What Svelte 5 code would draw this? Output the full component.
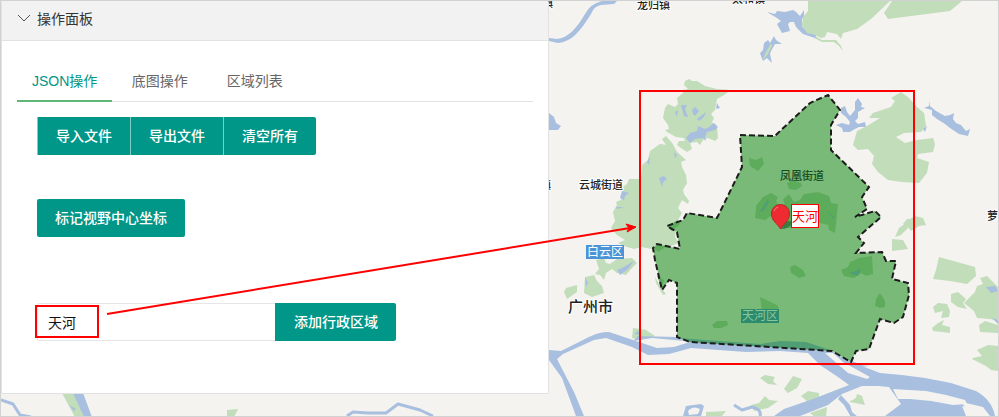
<script lang="ts">
  let open = true;
  let activeTab = 'json';
  let district = '天河';

  const tabs = [
    { id: 'json', label: 'JSON操作' },
    { id: 'basemap', label: '底图操作' },
    { id: 'areas', label: '区域列表' },
  ];

  const fileActions = ['导入文件', '导出文件', '清空所有'];

  const boundary =
    '740,135 775,136 778,133 810,103 828,95 840,110 831,125 831,150 869,187 862,197 867,209 855,217 875,211 881,217 858,237 864,243 856,253 882,252 886,261 896,261 892,279 908,283 909,295 903,317 894,323 880,319 869,349 856,351 851,362 832,351 770,347 690,342 677,337 677,283 669,280 662,290 655,260 653,248 657,244 680,249 677,232 667,226 683,220 687,213 717,218 742,167';

  const parks = [
    // Baiyun mountain, north part
    'M685 81L689 79 692 81 697 81 705 86 717 89 731 90 724 95 717 99 715 110 711 114 714 118 712 122 717 127 718 138 715 141 708 138 703 140 700 145 697 142 690 143 692 149 687 152 681 148 677 145 679 141 685 141 684 138 676 137 667 132 665 130 669 129 668 125 663 118 665 108 668 104 675 107 678 104 677 98 683 93 683 90 688 89 684 85Z',
    // Baiyun mountain, south part
    'M662 139L666 136 673 144 674 147 668 148Z',
    'M660 144L674 146 677 152 686 160 681 162 682 167 686 175 687 183 683 190 684 194 689 201 688 204 682 200 678 208 682 213 678 220 667 226 676 231 675 237 679 243 668 247 657 244 652 249 641 247 634 249 624 246 618 243 625 240 617 235 611 228 615 221 613 212 617 205 616 202 621 200 623 193 621 188 627 184 629 179 641 179 642 165 648 160 650 151Z',
    // small parks south of Baiyun
    'M596 260L604 258 606 263 610 264 617 259 632 258 637 263 631 269 626 275 617 273 612 269 606 273 604 280 600 275 595 274 599 269Z',
    'M585 277L594 275 597 281 602 286 604 293 592 297 584 293Z',
    'M566 288L577 285 577 292 567 299 564 292Z',
    'M633 328L646 330 655 336 640 340 632 338Z',
    'M655 277L662 289 666 294 663 295 656 283Z',
    // north side
    'M808 1L890 1 871 19 857 29 843 33 841 39 837 34 827 32 825 37 821 38 815 35 806 33 802 25 803 17 808 11Z',
    'M892 1L962 1 950 11 888 19 884 13Z',
    'M815 36L822 40 836 40 841 46 843 51 839 46 834 42 822 42 814 38Z',
    // east side
    'M891 98L901 92 909 98 917 107 924 113 926 126 921 132 904 133 896 137 905 143 917 140 933 138 935 144 933 152 918 154 917 158 929 162 927 173 919 183 902 182 888 180 878 172 872 164 874 156 868 149 858 150 853 145 857 131 867 126 880 118 869 118 873 113 891 107 895 101Z',
    'M903 224L907 219 910 219 915 216 923 218 926 225 919 226 911 231 907 226Z',
    'M895 237L899 228 906 223 908 228 901 235Z',
    'M892 239L903 240 908 249 892 251Z',
    'M939 257L975 267 976 276 967 284 950 281 933 279 936 270Z',
    'M951 294L958 292 966 299 963 303 967 309 958 307 951 302Z',
    'M933 307L938 303 947 304 950 311 949 317 941 318 943 311 935 313Z',
    'M932 328L938 323 944 320 942 325 950 327 950 333 933 331Z',
    'M966 301L975 292 977 286 983 284 980 278 987 276 998 287 998 321 990 319 977 318 974 311 964 303Z',
    'M979 325L985 321 998 325 998 333 980 332Z',
    'M973 358L982 356 977 350 988 345 998 346 998 371 991 370 986 366 972 359Z',
    // south side
    'M760 378L765 375 775 377 773 381 777 385 768 384Z',
    'M751 405L759 403 765 396 769 400 778 401 768 408 754 411Z',
    'M784 389L793 376 802 379 797 388 788 393Z',
    'M801 396L808 391 819 393 819 397 808 402Z',
    'M849 402L856 398 857 394 862 396 865 405 855 403Z',
    'M706 412L726 411 721 417 706 417Z',
    'M810 413L827 407 826 417 815 417Z',
    'M62 393L74 393 84 417 75 417 70 408Z',
    'M227 410L238 409 234 417 227 417Z',
  ];

  const lakes = [
    'M549 113L554 117 556 123 561 126 558 130 549 130Z',
    'M767 12L775 14 777 11 785 12 793 10 796 12 800 16 804 10 804 16 802 19 802 26 807 33 816 35 815 38 803 34 796 27 794 22 790 22 788 24 790 31 782 33 777 24 781 21 777 18Z',
    'M760 53L763 50 764 43 768 40 770 43 774 36 776 40 782 44 775 44 771 51 770 54 772 63 767 58 763 61 761 56Z',
    'M858 98L862 104 861 107 865 108 858 112 858 118 855 121 858 124 865 122 866 127 859 127 853 130 850 132 843 132 842 128 836 125 842 123 849 125 850 122 846 117 841 113 841 108 845 106 847 112 850 116 855 110 855 102Z',
    'M929 101L930 106 936 111 945 116 950 115 954 113 953 119 956 123 961 125 966 131 970 129 968 136 959 134 950 128 945 124 937 119 932 115 932 110 924 108 929 106Z',
    'M686 138L690 133 697 131 698 126 705 129 709 127 714 123 718 127 715 130 707 132 705 137 706 141 703 138 695 139 690 143Z',
    'M681 105L687 105 685 109 688 117 684 116Z',
    'M692 110L695 107 699 111 695 116 693 114Z',
    'M675 112L678 110 677 117Z',
    'M697 119L706 112 704 117 699 121Z',
    'M717 103L720 108 716 109Z',
    'M659 178L664 176 667 179 663 182 662 187Z',
    'M622 191L629 193 625 196 624 200 620 198Z',
    'M616 207L624 207 617 209Z',
    'M674 152L677 155 675 158Z',
    'M647 162L650 156 649 165Z',
    'M617 270L622 268 634 261 628 269 620 275Z',
    'M585 277L588 283 586 287Z',
    'M923 129L927 126 925 132Z',
    'M986 287L995 286 998 291 991 293Z',
    'M992 318L998 320 998 324Z',
    'M634 334L638 331 641 335Z',
  ];

  const hills = [
    'M749 158L756 160 762 157 764 164 758 171 750 166Z',
    'M756 206L763 197 771 193 778 197 776 201 780 207 776 212 765 220 755 218 756 210Z',
    'M770 209L779 211 785 207 783 199 789 194 794 202 800 200 804 194 818 192 829 196 831 203 838 204 835 233 829 230 828 225 812 221 803 225 795 228 785 228 776 222 772 220Z',
    'M787 183L793 180 801 183 802 186 796 190 789 189Z',
    'M667 226L678 220 680 224 672 231Z',
    'M654 248L658 244 666 247 658 252Z',
    'M657 276L664 280 662 288Z',
    'M712 325L717 321 727 321 728 325 721 328 714 328Z',
    'M760 297L773 303 778 306 779 311 762 311Z',
    'M790 267L795 265 803 270 806 276 799 278 791 273Z',
    'M841 270L848 267 850 262 859 258 872 256 873 274 866 276 861 273 854 278 844 276Z',
    'M876 299L880 293 885 301 885 307 880 308 875 306Z',
  ];
</script>

<svelte:head>
  <title>操作面板</title>
</svelte:head>

<main class="page">
  <svg class="layer" viewBox="1 1 997 415" preserveAspectRatio="xMinYMin slice" role="img" aria-label="广州市地图">
    <g class="park">
      {#each parks as d}
        <path {d} />
      {/each}
    </g>

    <g class="water">
      {#each lakes as d}
        <path {d} />
      {/each}
      <!-- north creek -->
      <path d="M549 38L557 39C568 38 577 28 585 14Q590 4 602 1H617L614 4 601 5Q594 6 591 14C580 32 571 42 558 43L549 41Z" />
      <!-- Pearl river -->
      <path d="M549 350L561 351 583 340Q599 331 609 332L633 340 657 348 674 347 693 341 760 345 830 350 849 361 880 373 902 375 925 378 951 383 976 391Q992 400 995 416L981 416Q976 410 962 406L966 416 885 416 901 404 889 387 878 386 862 386 842 394 828 405 800 416H774L784 409 813 399 849 385 838 377 820 365 808 353 780 351 746 352 691 348 669 354 648 355 632 347 606 338 594 340 563 354 557 359 574 392 584 416H576L562 378 549 360Z" />
      <path d="M841 395L850 405 852 412 858 417H851L844 405 838 399Z" />
      <path d="M638 336L676 337 685 341 652 338 633 341Z" />
      <path d="M849 359L860 365 870 366 858 367Z" />
      <path d="M683 416L686 406 701 404 704 406 701 416Z" />
      <path d="M73 393L83 393 92 417 84 417Z" />
      <path d="M69 405L76 409 74 411Z" />
    </g>
    <path class="park" d="M762 61L766 52 771 43 772 46 768 54Z" />

    <g class="creek">
      <path d="M1 400L13 404 20 415 31 417" stroke-width="3" />
      <path d="M347 416L353 412 368 413 386 413 398 404 420 410 433 416" stroke-width="3" />
      <path d="M734 405L742 410 752 407Q762 409 760 417" stroke-width="3" />
    </g>

    <!-- river islands -->
    <g class="island">
      <path d="M825 353L833 353 843 362 870 377 867 379 848 373Z" />
      <path d="M893 389L909 390 926 391 946 395 965 400 967 404 953 405 931 401 910 399 898 399Z" />
      <path d="M962 402L983 407 990 416H969Z" />
      <path d="M688 411Q693 405 700 409L698 414 689 415Z" />
    </g>
    <path class="creek" d="M828 362L838 370" stroke-width="1" />

    <polygon class="district" points={boundary} />
    <g class="hill">
      {#each hills as d}
        <path {d} />
      {/each}
    </g>
    <g class="stream">
      <path d="M678 338L760 344 780 341 806 342 833 351 770 347 690 342Z" />
      <path d="M768 199L769 202 764 210 759 213 764 205Z" />
      <path d="M828 212L834 217 834 219Z" />
      <path d="M849 273L861 269 858 276Z" />
    </g>
    <polygon class="district-line" points={boundary} />

    <g class="place">
      <text x="637" y="9">龙归镇</text>
      <text x="732" y="3">太和镇</text>
      <text x="542" y="7">镇</text>
      <text x="540" y="189">镇</text>
      <text x="579" y="189">云城街道</text>
      <text x="987" y="220">萝</text>
      <text class="city" x="568" y="312">广州市</text>
    </g>
    <text class="inner-place" x="780" y="180">凤凰街道</text>

    <rect class="tag" x="586" y="245" width="38" height="14" />
    <text class="tag-text" x="587" y="256">白云区</text>
    <rect class="tag-inner" x="741" y="309" width="38" height="14" />
    <text class="tag-inner-text" x="742" y="320">天河区</text>

    <ellipse class="shadow" cx="786" cy="225" rx="7" ry="3" transform="rotate(-25 786 225)" />
    <path class="pin" d="M780.5 229C778 224 771.5 221 771.5 214C771.5 208.5 775.5 204.5 780.5 204.5S789.5 208.5 789.5 214C789.5 221 783 224 780.5 229Z" />
    <path class="pin-shine" d="M774 211Q775 208 778 207" />
    <rect class="marker-edge" x="791" y="204" width="28" height="24" />
    <rect class="marker" x="792" y="205" width="26" height="22" />
    <text class="marker-text" x="792" y="221">天河</text>
  </svg>

  <section class="panel">
    <h2 class="panel-heading">
      <button class="panel-toggle" type="button" aria-expanded={open} on:click={() => (open = !open)}>
        <svg class="chevron" class:closed={!open} viewBox="0 0 14 14" aria-hidden="true">
          <path d="M1 3L7 9L13 3" />
        </svg>
        操作面板
      </button>
    </h2>

    {#if open}
      <div class="panel-body">
        <div class="tabs" role="tablist">
          {#each tabs as tab (tab.id)}
            <button
              class="tab"
              class:active={activeTab === tab.id}
              type="button"
              role="tab"
              aria-selected={activeTab === tab.id}
              on:click={() => (activeTab = tab.id)}
            >
              {tab.label}
            </button>
          {/each}
        </div>

        {#if activeTab === 'json'}
          <div class="tab-content" role="tabpanel">
            <div class="button-group">
              {#each fileActions as action}
                <button class="btn" type="button">{action}</button>
              {/each}
            </div>
            <button class="btn center-btn" type="button">标记视野中心坐标</button>
            <form class="district-form" on:submit|preventDefault>
              <input class="district-input" aria-label="行政区域" bind:value={district} />
              <button class="btn add-btn" type="submit">添加行政区域</button>
            </form>
          </div>
        {/if}
      </div>
    {/if}
  </section>

  <svg class="layer notes" viewBox="1 1 997 415" preserveAspectRatio="xMinYMin slice" aria-hidden="true">
    <rect x="36" y="306" width="62" height="31" />
    <rect x="640" y="91" width="274" height="273" />
    <path d="M107 314L630 228" />
    <path class="arrow-head" d="M636 227L627 232L629 228L626 224Z" />
  </svg>
</main>

<style>
  :global(body) {
    margin: 0;
  }

  .page {
    position: relative;
    box-sizing: border-box;
    min-height: 100vh;
    overflow: hidden;
    border: 1px solid #d2d2d2;
    background: #f4f3f0;
    font-family: 'Liberation Sans', 'Noto Sans CJK SC', sans-serif;
    font-size: 14px;
    line-height: 20px;
  }

  .layer {
    position: absolute;
    inset: 0;
    width: 100%;
    height: 100%;
  }

  .park {
    fill: #c1ddb9;
  }

  .water {
    fill: #a8bfdf;
  }

  .creek {
    fill: none;
    stroke: #a8bfdf;
    stroke-linejoin: round;
  }

  .island {
    fill: #f4f3f0;
  }

  .district {
    fill: #7aba79;
  }

  .hill {
    fill: #5dac5b;
  }

  .stream {
    fill: #4f9e76;
  }

  .district-line {
    fill: none;
    stroke: #1c1c1c;
    stroke-width: 2;
    stroke-dasharray: 6 3;
  }

  .place {
    fill: #222;
    stroke: #fff;
    stroke-width: 2;
    paint-order: stroke;
    font-size: 11px;
    font-weight: 500;
  }

  .city {
    font-size: 15px;
  }

  .inner-place {
    fill: #174c20;
    font-size: 11px;
    font-weight: 500;
  }

  .tag {
    fill: #4d94d6;
  }

  .tag-text {
    fill: #fff;
    font-size: 12px;
  }

  .tag-inner {
    fill: #2c8b6c;
  }

  .tag-inner-text {
    fill: #8bc69a;
    font-size: 12px;
  }

  .shadow {
    fill: #2b6b36;
    opacity: 0.7;
  }

  .pin {
    fill: #ee2b30;
    stroke: #b92727;
    stroke-width: 1;
  }

  .pin-shine {
    fill: none;
    stroke: #f77c7c;
  }

  .marker-edge {
    fill: #f00;
  }

  .marker {
    fill: #fff;
  }

  .marker-text {
    fill: #f00;
    font-size: 13px;
  }

  .panel {
    position: relative;
    box-sizing: border-box;
    width: 100%;
    max-width: 548px;
    border: solid #e2e2e2;
    border-width: 0 1px 1px;
    border-radius: 2px;
    background: #fff;
  }

  .panel-heading {
    margin: 0;
    border-bottom: 1px solid #e2e2e2;
    background: #f2f2f2;
    font-size: 14px;
    font-weight: 400;
  }

  button,
  input {
    box-sizing: border-box;
    margin: 0;
    border: 0;
    font: inherit;
  }

  button {
    cursor: pointer;
  }

  .panel-toggle {
    display: flex;
    align-items: center;
    gap: 6px;
    width: 100%;
    height: 39px;
    padding: 0 15px 3px;
    background: none;
    color: #333;
  }

  .chevron {
    width: 14px;
    height: 14px;
    fill: none;
    stroke: #555;
  }

  .chevron.closed {
    transform: rotate(-90deg);
  }

  .panel-body {
    padding: 20px 15px 52px;
  }

  .tabs {
    display: flex;
    border-bottom: 1px solid #e2e2e2;
  }

  .tab {
    min-width: 95px;
    height: 41px;
    margin-bottom: -1px;
    padding: 0 15px;
    border-bottom: 2px solid transparent;
    background: none;
    color: #666;
    white-space: nowrap;
  }

  .tab.active {
    border-bottom-color: #5fb878;
    color: #009688;
  }

  .tab-content {
    padding: 15px 20px 0;
  }

  .button-group,
  .district-form {
    display: flex;
  }

  .btn {
    height: 38px;
    padding: 0 18px;
    border-radius: 2px;
    background: #009688;
    color: #fff;
    font-weight: 500;
    white-space: nowrap;
  }

  .button-group .btn {
    border-left: 1px solid rgba(255, 255, 255, 0.5);
    border-radius: 0;
  }

  .button-group .btn:last-child {
    border-radius: 0 2px 2px 0;
  }

  .center-btn {
    display: block;
    margin: 44px 0 66px;
  }

  .district-input {
    flex: 0 1 238px;
    min-width: 0;
    height: 38px;
    padding: 0 10px;
    border: 1px solid #e6e6e6;
    border-right: 0;
    border-radius: 2px 0 0 2px;
    background: #fff;
    color: #111;
  }

  .add-btn {
    border-left: 1px solid #009688;
    border-radius: 0 2px 2px 0;
  }

  .notes {
    fill: none;
    stroke: #f00;
    stroke-width: 2;
    pointer-events: none;
  }

  .arrow-head {
    fill: #f00;
    stroke-width: 1;
  }
</style>
